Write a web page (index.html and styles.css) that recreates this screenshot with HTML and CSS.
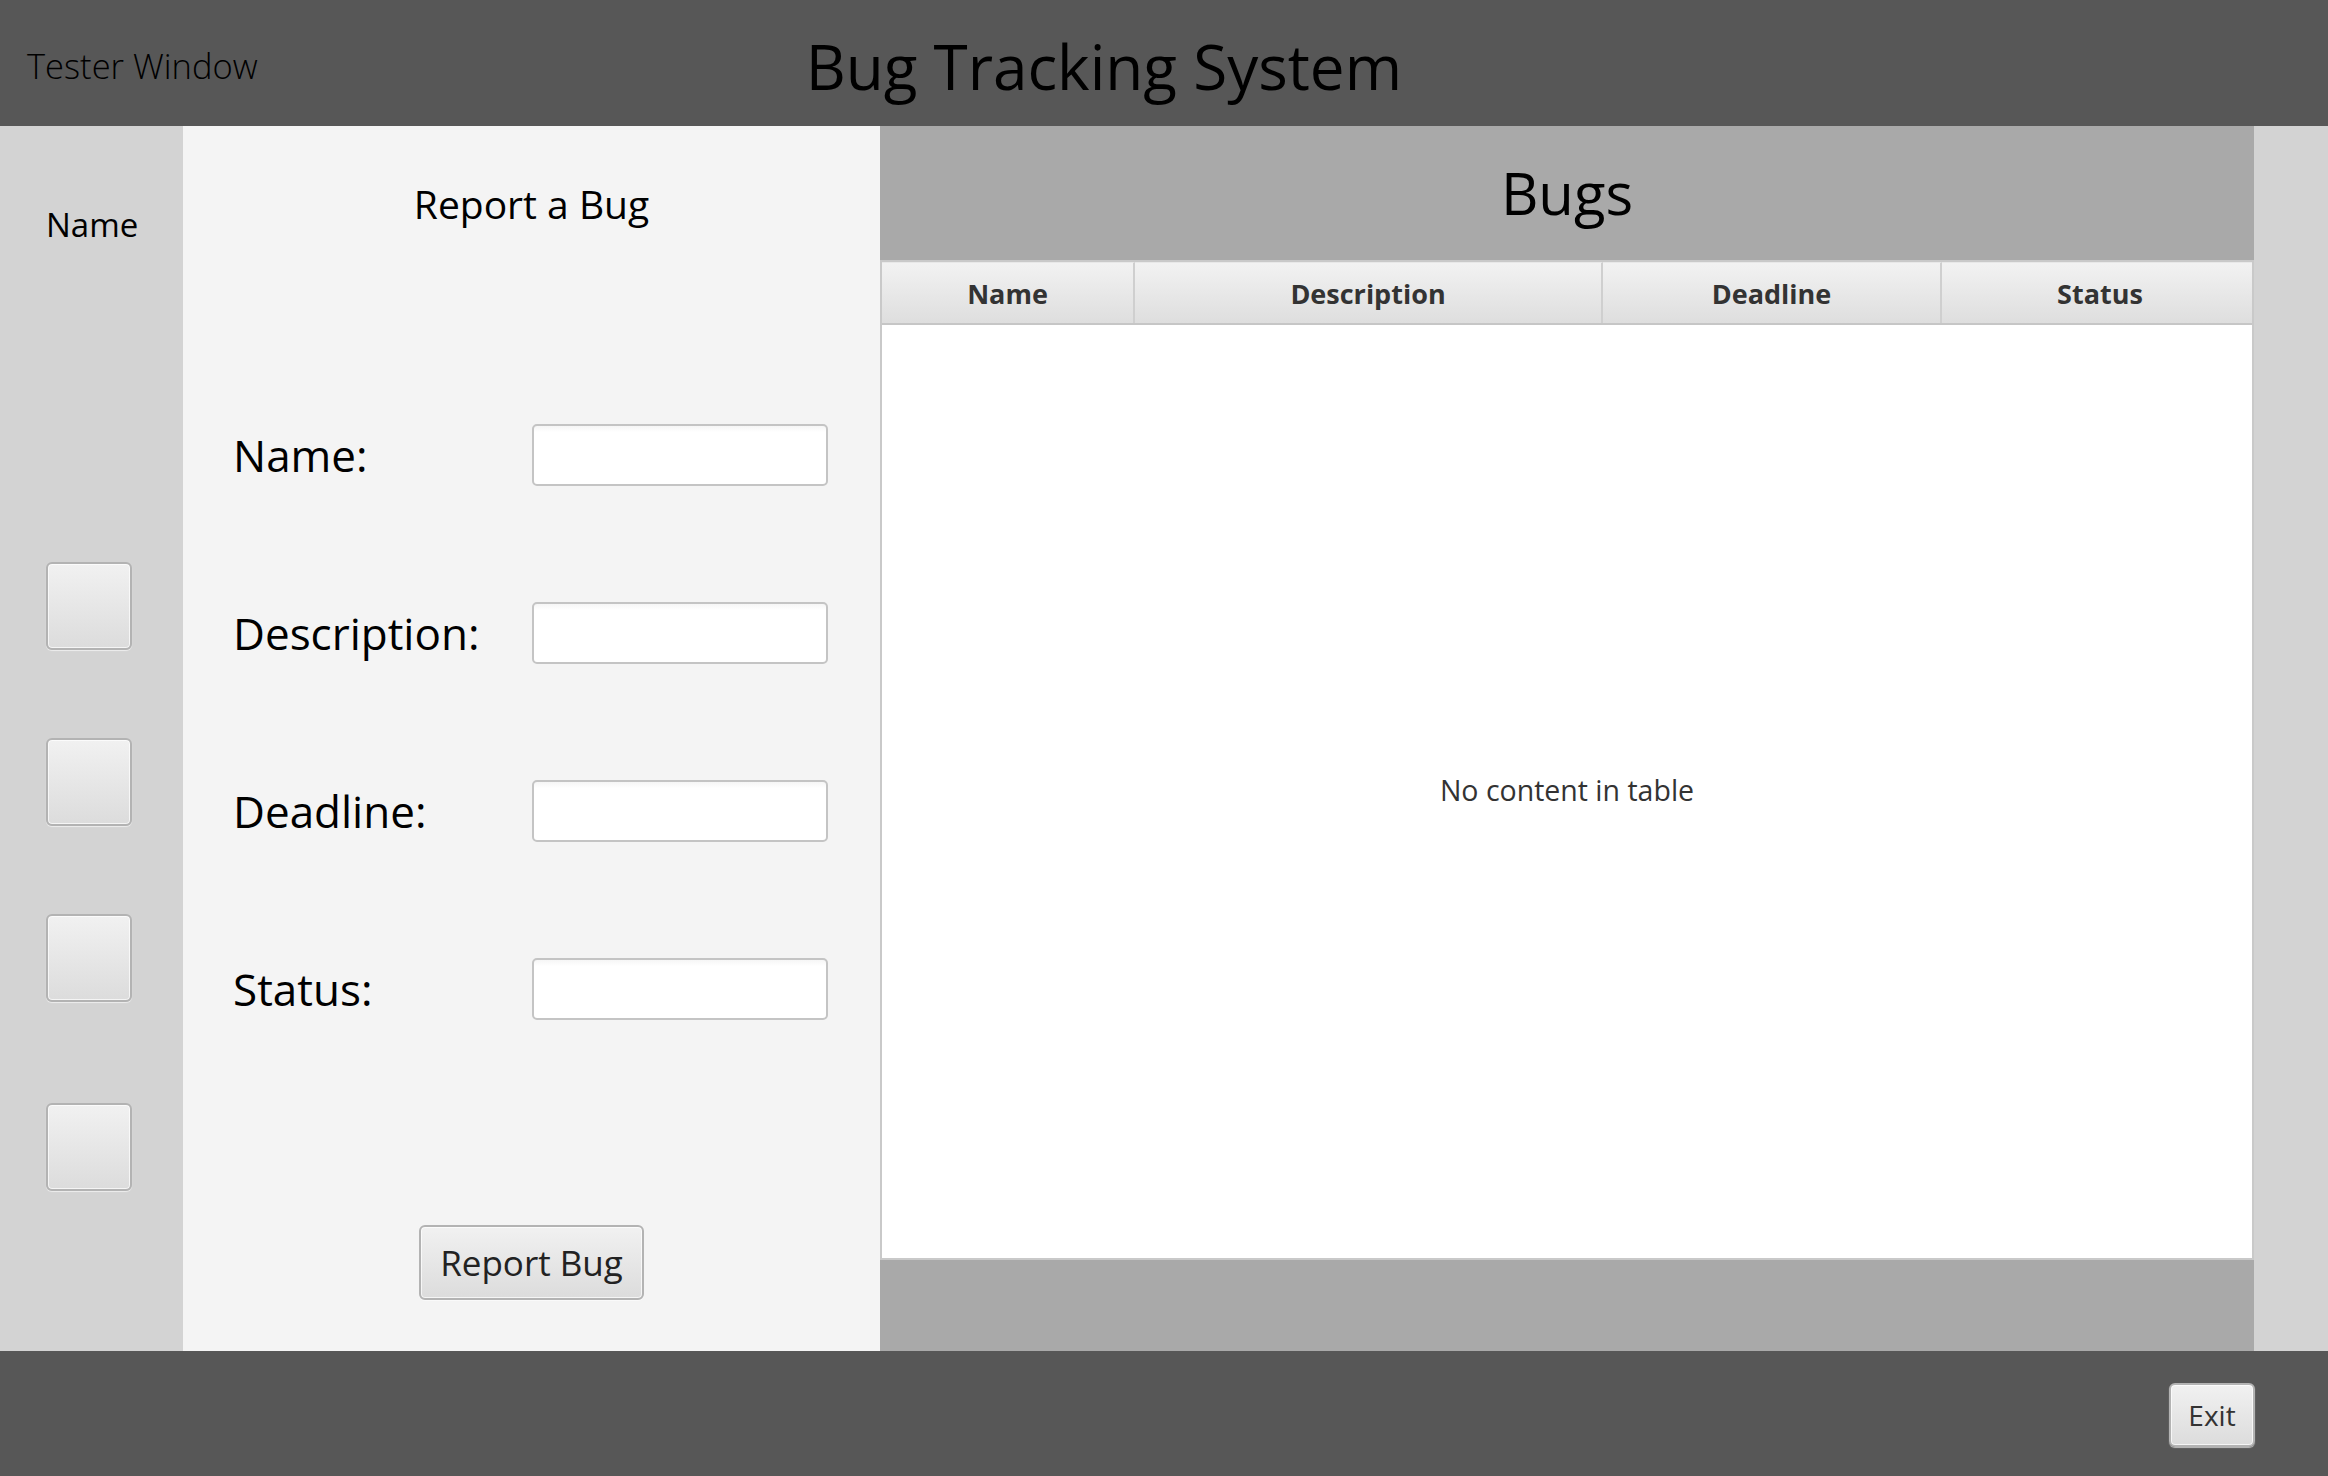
FILE: index.html
```html
<!DOCTYPE html>
<html lang="en">
<head>
<meta charset="utf-8">
<title>Bug Tracking System</title>
<link rel="stylesheet" href="styles.css">
</head>
<body>
<div class="app">
  <header class="topbar">
    <span class="win-title">Tester Window</span>
    <h1 class="app-title">Bug Tracking System</h1>
  </header>
  <main class="main">
    <aside class="sidebar">
      <div class="side-label">Name</div>
      <button class="fx-btn side-btn first"></button>
      <button class="fx-btn side-btn"></button>
      <button class="fx-btn side-btn"></button>
      <button class="fx-btn side-btn last"></button>
    </aside>
    <section class="report">
      <h2 class="report-title">Report a Bug</h2>
      <form class="report-form">
        <label class="field-label" for="f-name">Name:</label>
        <input class="field-input" id="f-name" type="text">
        <label class="field-label" for="f-desc">Description:</label>
        <input class="field-input" id="f-desc" type="text">
        <label class="field-label" for="f-dead">Deadline:</label>
        <input class="field-input" id="f-dead" type="text">
        <label class="field-label" for="f-stat">Status:</label>
        <input class="field-input" id="f-stat" type="text">
      </form>
      <button class="fx-btn report-btn" type="button">Report Bug</button>
    </section>
    <section class="bugs">
      <h2 class="bugs-title">Bugs</h2>
      <div class="table">
        <div class="thead">
          <div class="th col-name">Name</div>
          <div class="th col-desc">Description</div>
          <div class="th col-dead">Deadline</div>
          <div class="th col-stat">Status</div>
        </div>
        <div class="tbody">No content in table</div>
      </div>
      <div class="bugs-foot"></div>
    </section>
    <div class="strip"></div>
  </main>
  <footer class="bottombar">
    <button class="fx-btn exit-btn" type="button">Exit</button>
  </footer>
</div>
</body>
</html>
```
FILE: styles.css
```css
* { box-sizing: border-box; }
html, body { margin: 0; padding: 0; }
body {
  width: 2328px;
  height: 1476px;
  overflow: hidden;
  font-family: "Open Sans", "Noto Sans", sans-serif;
  color: #000;
}
.app {
  display: grid;
  grid-template-rows: 126px 1225px 125px;
  width: 2328px;
  height: 1476px;
}

/* top bar */
.topbar {
  background: #575757;
  display: flex;
  align-items: center;
  padding: 5px 0 0 27px;
}
.win-title {
  font-size: 34.5px;
  font-weight: 300;
  line-height: 40px;
  color: #000;
}
.app-title {
  margin: 0 0 0 548px;
  font-size: 62px;
  font-weight: 400;
  line-height: 80px;
  color: #000;
}

/* main */
.main {
  display: grid;
  grid-template-columns: 183px 697px 1374px 74px;
}
.sidebar {
  background: #d3d3d3;
  display: flex;
  flex-direction: column;
  align-items: flex-start;
  padding: 74px 0 0 46px;
}
.side-label {
  font-size: 33px;
  line-height: 50px;
  width: 86px;
  text-align: center;
}
.fx-btn {
  font-family: "Open Sans", "Noto Sans", sans-serif;
  background: linear-gradient(#f1f1f1, #dcdcdc);
  border: 2px solid #b3b3b3;
  border-radius: 6px;
  box-shadow: inset 0 0 0 1px rgba(255,255,255,0.7), 0 1px 1px rgba(255,255,255,0.6);
  color: #333;
  padding: 0;
  cursor: default;
}
.side-btn {
  width: 86px;
  height: 88px;
  margin-top: 88px;
}
.side-btn.first { margin-top: 312px; }
.side-btn.last { margin-top: 101px; }

/* report */
.report {
  background: #f4f4f4;
  display: flex;
  flex-direction: column;
  align-items: center;
  padding-top: 48px;
}
.report-title {
  margin: 0;
  font-size: 39px;
  font-weight: 400;
  line-height: 60px;
}
.report-form {
  margin-top: 190px;
  display: grid;
  grid-template-columns: 299px 296px;
  grid-auto-rows: 62px;
  row-gap: 116px;
  width: 595px;
  margin-left: -2px;
}
.field-label {
  font-size: 44px;
  line-height: 62px;
}
.field-input {
  height: 62px;
  width: 296px;
  border: 2px solid #c4c4c4;
  border-radius: 5px;
  background: linear-gradient(#f6f6f6 0, #ffffff 6px);
  font-size: 24px;
}
.report-btn {
  margin-top: 205px;
  width: 225px;
  height: 75px;
  font-size: 35px;
  line-height: 60px;
  color: #222;
}

/* bugs */
.bugs {
  background: #a9a9a9;
  display: grid;
  grid-template-rows: 134px 1000px 91px;
}
.bugs-title {
  margin: 0;
  font-size: 58px;
  font-weight: 400;
  line-height: 134px;
  text-align: center;
}
.table {
  background: #fff;
  border: 2px solid #c9c9c9;
  display: flex;
  flex-direction: column;
}
.thead {
  display: grid;
  grid-template-columns: 253px 468px 339px 1fr;
  height: 63px;
  border-bottom: 2px solid #c6c6c6;
}
.th {
  background: linear-gradient(#f2f2f2, #dedede);
  border-right: 2px solid #cfcfcf;
  border-top: 1px solid #e8e8e8;
  font-weight: 700;
  font-size: 27px;
  color: #333;
  display: flex;
  align-items: center;
  justify-content: center;
}
.th.col-stat { border-right: none; padding-left: 6px; }
.tbody {
  flex: 1;
  display: flex;
  align-items: center;
  justify-content: center;
  font-size: 28.5px;
  color: #333;
  padding-bottom: 4px;
}
.bugs-foot { background: #a9a9a9; }
.strip { background: #d3d3d3; }

/* bottom */
.bottombar {
  background: #575757;
  display: flex;
  align-items: center;
  justify-content: flex-end;
  padding-right: 73px;
}
.exit-btn {
  width: 86px;
  height: 64px;
  font-size: 28px;
  margin-top: 3px;
}
```
